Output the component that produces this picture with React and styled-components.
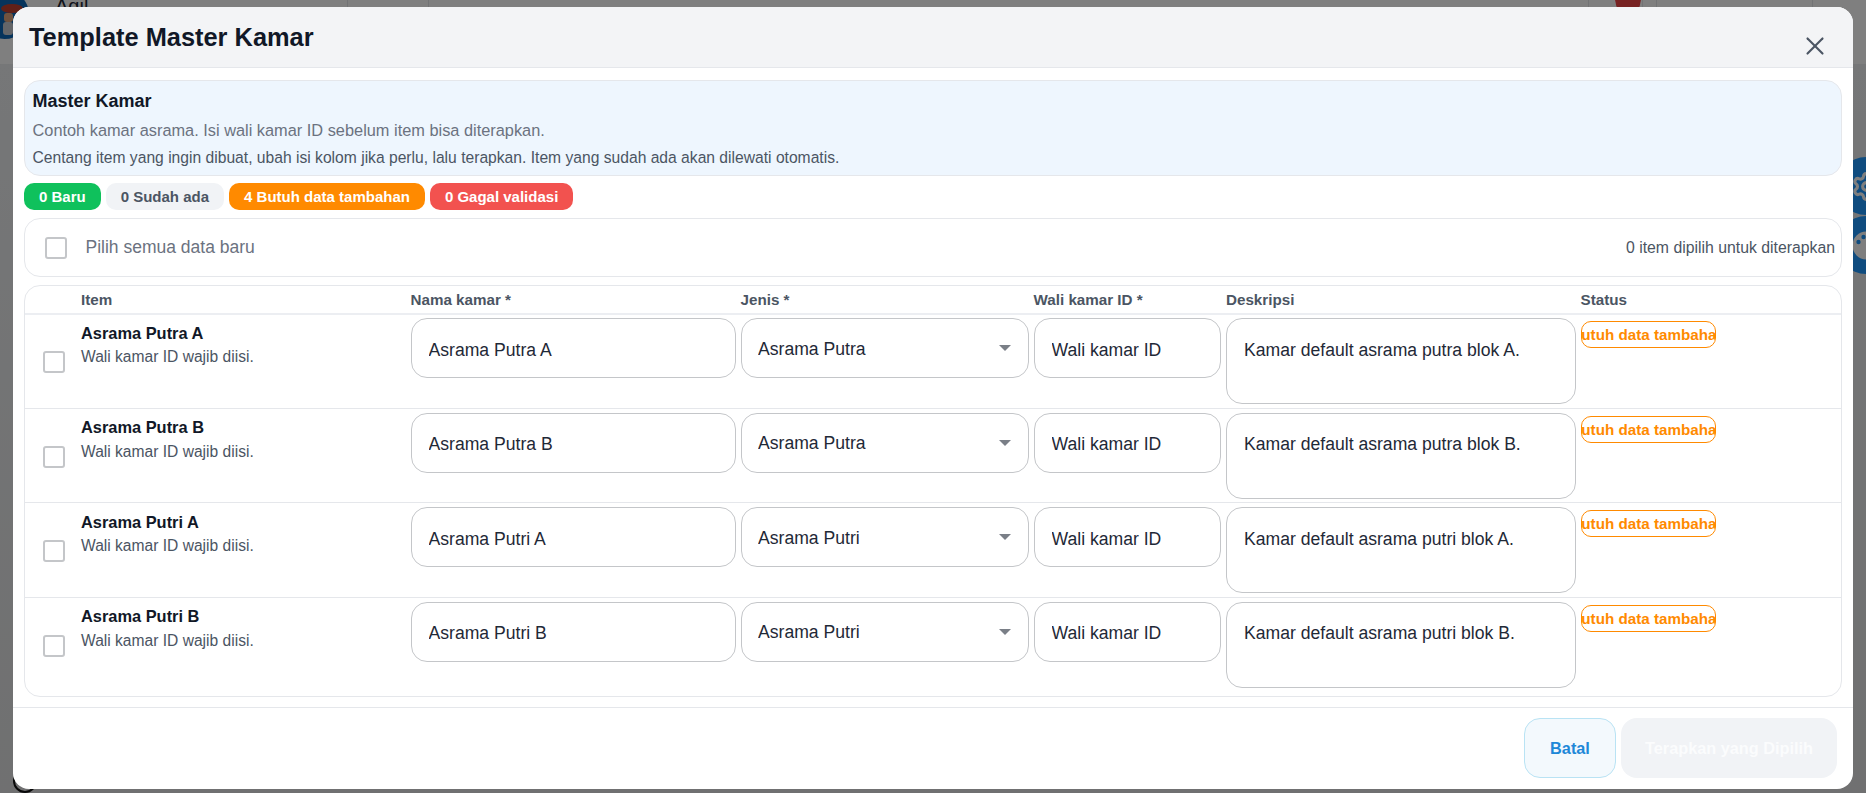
import React from "react";
import styled, { createGlobalStyle } from "styled-components";
import { X, Settings } from "lucide-react";

const rows = [
  { name: "Asrama Putra A", type: "Asrama Putra", desc: "Kamar default asrama putra blok A." },
  { name: "Asrama Putra B", type: "Asrama Putra", desc: "Kamar default asrama putra blok B." },
  { name: "Asrama Putri A", type: "Asrama Putri", desc: "Kamar default asrama putri blok A." },
  { name: "Asrama Putri B", type: "Asrama Putri", desc: "Kamar default asrama putri blok B." },
];

const topDividers = [347, 428, 1588, 1642, 1656, 1812];

const App = () => {
  return (
    <>
      <GlobalStyle />
      <Page>
        <Avatar>
          <AvatarHat />
          <AvatarFace />
          <AvatarBody />
        </Avatar>
        <PageName>Agil</PageName>
        {topDividers.map((left) => (
          <TopDivider key={left} $left={left} />
        ))}
        <RedDot />
        <SideButton $top={157}>
          <Settings size={31} strokeWidth={2.4} />
        </SideButton>
        <SideButton $top={216}>
          <svg width="29" height="29" viewBox="0 0 29 29">
            <circle cx="14.5" cy="14.5" r="14" fill="#fff" />
            <circle cx="6.5" cy="11" r="2.2" fill="#1e98ff" />
            <circle cx="11.5" cy="6" r="2.2" fill="#1e98ff" />
          </svg>
        </SideButton>
        <CornerArc />
      </Page>
      <Overlay>
        <Modal>
          <Header>
            <Title>Template Master Kamar</Title>
            <CloseButton aria-label="Tutup">
              <X size={30} strokeWidth={1.7} />
            </CloseButton>
          </Header>
          <Body>
            <InfoBox>
              <InfoTitle>Master Kamar</InfoTitle>
              <InfoText>Contoh kamar asrama. Isi wali kamar ID sebelum item bisa diterapkan.</InfoText>
              <InfoHint>Centang item yang ingin dibuat, ubah isi kolom jika perlu, lalu terapkan. Item yang sudah ada akan dilewati otomatis.</InfoHint>
            </InfoBox>
            <Badges>
              <Badge $bg="#0fc15c" $color="#fff">0 Baru</Badge>
              <Badge $bg="#f1f3f6" $color="#4b5563">0 Sudah ada</Badge>
              <Badge $bg="#ff8a00" $color="#fff">4 Butuh data tambahan</Badge>
              <Badge $bg="#f2524f" $color="#fff">0 Gagal validasi</Badge>
            </Badges>
            <SelectBar>
              <SelectLabel>
                <Check type="checkbox" />
                Pilih semua data baru
              </SelectLabel>
              <SelectCount>0 item dipilih untuk diterapkan</SelectCount>
            </SelectBar>
            <TableCard>
              <HeadRow>
                <HeadCell />
                <HeadCell>Item</HeadCell>
                <HeadCell>Nama kamar *</HeadCell>
                <HeadCell>Jenis *</HeadCell>
                <HeadCell>Wali kamar ID *</HeadCell>
                <HeadCell>Deskripsi</HeadCell>
                <HeadCell>Status</HeadCell>
              </HeadRow>
              {rows.map((row) => (
                <Row key={row.name}>
                  <CheckCell>
                    <Check type="checkbox" />
                  </CheckCell>
                  <ItemCell>
                    <ItemName>{row.name}</ItemName>
                    <ItemNote>Wali kamar ID wajib diisi.</ItemNote>
                  </ItemCell>
                  <Cell>
                    <TextInput defaultValue={row.name} />
                  </Cell>
                  <Cell>
                    <SelectWrap>
                      <SelectInput defaultValue={row.type}>
                        <option>Asrama Putra</option>
                        <option>Asrama Putri</option>
                      </SelectInput>
                    </SelectWrap>
                  </Cell>
                  <Cell>
                    <TextInput placeholder="Wali kamar ID" />
                  </Cell>
                  <Cell>
                    <TextArea defaultValue={row.desc} />
                  </Cell>
                  <Cell>
                    <StatusBadge>
                      <span>Butuh data tambahan</span>
                    </StatusBadge>
                  </Cell>
                </Row>
              ))}
            </TableCard>
          </Body>
          <Footer>
            <CancelButton>Batal</CancelButton>
            <ApplyButton disabled>Terapkan yang Dipilih</ApplyButton>
          </Footer>
        </Modal>
      </Overlay>
    </>
  );
};

const GlobalStyle = createGlobalStyle`
  html, body {
    margin: 0;
    height: 100%;
    overflow: hidden;
    font-family: "Liberation Sans", Arial, sans-serif;
  }
  * {
    box-sizing: border-box;
  }
`;

const Page = styled.div`
  position: fixed;
  inset: 0;
  overflow: hidden;
  background: linear-gradient(#fff 0, #fff 64px, #eceef0 64px, #e0e1e2 100%);
`;

const Avatar = styled.div`
  position: absolute;
  left: -20px;
  top: -10px;
  width: 49px;
  height: 49px;
  border-radius: 50%;
  background: #0d68b8;
`;

const AvatarHat = styled.div`
  position: absolute;
  left: 21px;
  top: 14px;
  width: 22px;
  height: 9px;
  border-radius: 50%;
  background: #c2402f;
`;

const AvatarFace = styled.div`
  position: absolute;
  left: 24px;
  top: 23px;
  width: 9px;
  height: 9px;
  border-radius: 3px;
  background: #e0a77e;
`;

const AvatarBody = styled.div`
  position: absolute;
  left: 23px;
  top: 32px;
  width: 10px;
  height: 13px;
  border-radius: 3px;
  background: #c9ccd2;
`;

const PageName = styled.div`
  position: absolute;
  left: 55px;
  top: -5px;
  font-size: 20px;
  color: #1f2937;
`;

const TopDivider = styled.div`
  position: absolute;
  left: ${(p) => p.$left}px;
  top: 0;
  width: 1px;
  height: 8px;
  background: #e5e7eb;
`;

const RedDot = styled.div`
  position: absolute;
  left: 1615px;
  top: -20px;
  width: 26px;
  height: 36px;
  border-radius: 50%;
  background: #ef4444;
`;

const SideButton = styled.div`
  position: absolute;
  left: 1837px;
  top: ${(p) => p.$top}px;
  width: 58px;
  height: 58px;
  border-radius: 50%;
  background: #1e98ff;
  color: #fff;
  display: flex;
  align-items: center;
  justify-content: center;
`;

const CornerArc = styled.div`
  position: absolute;
  left: 13px;
  top: 769px;
  width: 24px;
  height: 24px;
  border: 2px solid #111;
  border-radius: 50%;
`;

const Overlay = styled.div`
  position: fixed;
  inset: 0;
  background: rgba(0, 0, 0, 0.5);
  display: flex;
  padding: 7px 13px 4px;
`;

const Modal = styled.div`
  flex: 1;
  background: #fff;
  border-radius: 16px;
  overflow: hidden;
  display: flex;
  flex-direction: column;
`;

const Header = styled.div`
  height: 61px;
  flex: none;
  background: #f3f4f6;
  border-bottom: 1px solid #e5e7eb;
  padding: 0 23px 0 16px;
  display: flex;
  justify-content: space-between;
`;

const Title = styled.h2`
  margin: 15px 0 0;
  font-size: 25.4px;
  line-height: 30px;
  font-weight: 700;
  color: #111827;
`;

const CloseButton = styled.button`
  border: 0;
  background: none;
  padding: 0;
  margin-top: 24px;
  width: 30px;
  height: 30px;
  color: #4b5563;
  display: flex;
`;

const Body = styled.div`
  flex: 1;
  padding: 12px 11px 0 11px;
  display: flex;
  flex-direction: column;
`;

const InfoBox = styled.div`
  height: 96px;
  background: #eef6fe;
  border: 1px solid #e5e7eb;
  border-radius: 16px;
  padding: 9px 7.5px 0;
  color: #4b5563;
`;

const InfoTitle = styled.div`
  font-size: 18px;
  line-height: 22px;
  font-weight: 700;
  color: #111827;
`;

const InfoText = styled.div`
  margin-top: 7px;
  font-size: 16.35px;
  line-height: 22px;
  color: #6b7280;
`;

const InfoHint = styled.div`
  margin-top: 6px;
  font-size: 15.65px;
  line-height: 22px;
  color: #4b5563;
`;

const Badges = styled.div`
  margin-top: 7px;
  display: flex;
  gap: 5px;
`;

const Badge = styled.span`
  height: 27px;
  padding: 0 15px;
  border-radius: 10px;
  background: ${(p) => p.$bg};
  color: ${(p) => p.$color};
  font-size: 15px;
  font-weight: 700;
  display: flex;
  align-items: center;
`;

const SelectBar = styled.div`
  margin-top: 8px;
  height: 59px;
  border: 1px solid #e5e7eb;
  border-radius: 16px;
  padding: 0 6px 0 20px;
  display: flex;
  align-items: center;
  justify-content: space-between;
`;

const SelectLabel = styled.label`
  display: flex;
  align-items: center;
  gap: 18.5px;
  font-size: 17.5px;
  color: #6b7280;
`;

const SelectCount = styled.span`
  font-size: 15.8px;
  color: #4b5563;
`;

const Check = styled.input`
  appearance: none;
  margin: 0;
  width: 22px;
  height: 22px;
  border: 2px solid #c4c6c9;
  border-radius: 3px;
  background: #fff;
`;

const TableCard = styled.div`
  margin-top: 7.5px;
  border: 1px solid #e5e7eb;
  border-radius: 16px;
  overflow: hidden;
`;

const gridColumns = "53.5px 329.5px 330px 293px 192.5px 354.5px 1fr";

const HeadRow = styled.div`
  display: grid;
  grid-template-columns: ${gridColumns};
  height: 29.5px;
  border-bottom: 2px solid #eceef2;
`;

const HeadCell = styled.div`
  padding: 5px 2.5px 0;
  font-size: 15.2px;
  line-height: 18px;
  font-weight: 700;
  color: #4b5563;
`;

const Row = styled.div`
  display: grid;
  grid-template-columns: ${gridColumns};
  padding: 4px 0 3.5px;
  border-bottom: 1px solid #e5e7eb;

  &:nth-child(2) {
    padding-top: 3px;
  }

  &:last-child {
    padding-bottom: 8px;
    border-bottom: 0;
  }
`;

const Cell = styled.div`
  padding: 0 2.5px;
  min-width: 0;
`;

const CheckCell = styled(Cell)`
  display: flex;
  align-items: center;
  justify-content: center;
  padding: 2px 0 0 5px;
`;

const ItemCell = styled(Cell)`
  padding-top: 5.5px;
`;

const ItemName = styled.div`
  font-size: 16.4px;
  line-height: 18px;
  font-weight: 700;
  color: #111827;
`;

const ItemNote = styled.div`
  margin-top: 6.5px;
  font-size: 15.6px;
  line-height: 18px;
  color: #4b5563;
`;

const fieldStyles = `
  width: 100%;
  border: 1px solid #c4c6c9;
  border-radius: 16px;
  background: #fff;
  color: #1f2937;
  font-family: "Liberation Sans", Arial, sans-serif;
  font-size: 17.6px;
  outline: none;
`;

const TextInput = styled.input`
  ${fieldStyles}
  display: block;
  height: 60px;
  padding: 4px 16.5px 0 17px;

  &::placeholder {
    color: #1f2937;
    opacity: 1;
  }
`;

const SelectWrap = styled.div`
  position: relative;

  &::after {
    content: "";
    position: absolute;
    right: 18px;
    top: 27px;
    border-left: 6px solid transparent;
    border-right: 6px solid transparent;
    border-top: 6px solid #7a7f87;
    pointer-events: none;
  }
`;

const SelectInput = styled.select`
  ${fieldStyles}
  display: block;
  appearance: none;
  height: 60px;
  padding: 1px 16.5px 0;
`;

const TextArea = styled.textarea`
  ${fieldStyles}
  display: block;
  height: 86px;
  padding: 19.5px 17px 0;
  line-height: 22px;
  resize: none;
`;

const StatusBadge = styled.div`
  margin-top: 3px;
  width: 135px;
  height: 27px;
  border: 1px solid #ff8a00;
  border-radius: 10px;
  color: #ff8a00;
  font-size: 15.2px;
  font-weight: 700;
  white-space: nowrap;
  overflow: hidden;
  display: flex;
  align-items: center;
  justify-content: center;
`;

const Footer = styled.div`
  height: 82px;
  flex: none;
  border-top: 1px solid #e5e7eb;
  padding: 10px 16px 0 0;
  display: flex;
  justify-content: flex-end;
  gap: 5px;
`;

const FooterButton = styled.button`
  height: 60px;
  border-radius: 16px;
  font-family: "Liberation Sans", Arial, sans-serif;
  font-size: 16.3px;
  font-weight: 700;
`;

const CancelButton = styled(FooterButton)`
  width: 92px;
  background: #f3f9fd;
  border: 1px solid #b9e3f4;
  color: #1e88d8;
`;

const ApplyButton = styled(FooterButton)`
  width: 216px;
  background: #f1f3f6;
  border: 0;
  color: #fbfcfd;
`;

export default App;
